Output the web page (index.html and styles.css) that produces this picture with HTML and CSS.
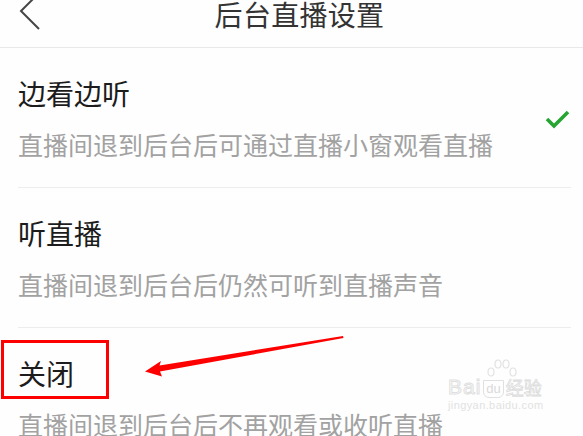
FILE: index.html
```html
<!DOCTYPE html>
<html lang="zh-CN">
<head>
<meta charset="utf-8">
<title>后台直播设置</title>
<link rel="stylesheet" href="styles.css">
</head>
<body>
<div class="page">
  <header class="topbar">
    <div class="back">
      <svg width="50" height="47" viewBox="0 0 50 47"><path d="M39 -7 L21 11 L39 29" fill="none" stroke="#454545" stroke-width="2"/></svg>
    </div>
    <h1 class="title">后台直播设置</h1>
    <div></div>
  </header>
  <ul class="list">
    <li class="item">
      <div class="texts">
        <div class="name">边看边听</div>
        <div class="desc">直播间退到后台后可通过直播小窗观看直播</div>
      </div>
      <svg class="check" width="26" height="22" viewBox="0 0 26 22"><path d="M2 11 L9 18 L23 4" fill="none" stroke="#26a532" stroke-width="3.6"/></svg>
    </li>
    <li class="item">
      <div class="texts">
        <div class="name">听直播</div>
        <div class="desc">直播间退到后台后仍然可听到直播声音</div>
      </div>
    </li>
    <li class="item">
      <div class="texts">
        <div class="name">关闭</div>
        <div class="desc">直播间退到后台后不再观看或收听直播</div>
      </div>
    </li>
  </ul>

  <svg class="marks" width="583" height="436" viewBox="0 0 583 436">
    <rect x="2.5" y="341.5" width="105" height="56" fill="none" stroke="#ff0000" stroke-width="3"/>
    <polygon points="145,371.5 161,361 159.5,365.5 343,336 343.5,338 160,371.5 162,376.5" fill="#ff0000"/>
  </svg>

  <div class="watermark">
    <div class="wm-top">
      <span class="wm-bai">Bai</span><span class="wm-du">du</span><span class="wm-jy">经验</span>
    </div>
    <div class="wm-url">jingyan.baidu.com</div>
    <svg class="wm-paw" width="32" height="24" viewBox="0 0 32 24">
      <g fill="none" stroke="#e2e2e2" stroke-width="1.2">
        <ellipse cx="5" cy="14" rx="3" ry="4"/>
        <ellipse cx="12" cy="6" rx="3" ry="4"/>
        <ellipse cx="20" cy="6" rx="3" ry="4"/>
        <ellipse cx="27" cy="14" rx="3" ry="4"/>
      </g>
    </svg>
  </div>
</div>
</body>
</html>
```

FILE: styles.css
```css
* { box-sizing: border-box; }
html, body {
  margin: 0;
  padding: 0;
  background: #ffffff;
}
body {
  width: 583px;
  height: 436px;
  overflow: hidden;
  font-family: "Noto Sans CJK SC", "Noto Sans", sans-serif;
}
.page {
  position: relative;
  width: 583px;
  height: 436px;
  overflow: hidden;
  background: #fefefe;
}
.topbar {
  display: grid;
  grid-template-columns: 1fr auto 1fr;
  align-items: start;
  height: 48px;
  border-bottom: 1px solid #e9e9e9;
}
.back svg { display: block; }
.title {
  margin: 0 0 0 16px;
  font-size: 28px;
  line-height: 28px;
  font-weight: 400;
  color: #333333;
  letter-spacing: 0.3px;
}
.list {
  list-style: none;
  margin: 0;
  padding: 0;
}
.item {
  display: flex;
  align-items: center;
  justify-content: space-between;
  margin: 0 12px 0 18px;
  height: 140px;
  border-bottom: 1px solid #ededed;
}
.texts {
  display: flex;
  flex-direction: column;
  gap: 17px;
  padding-top: 2px;
}
.name {
  font-size: 28px;
  line-height: 34px;
  color: #1c1c1c;
}
.desc {
  font-size: 25px;
  line-height: 34px;
  color: #a2a2a2;
}
.check {
  display: block;
  margin-top: 2px;
}
.marks {
  position: absolute;
  left: 0;
  top: 0;
  pointer-events: none;
}
.watermark {
  position: absolute;
  left: 448px;
  top: 376px;
  width: 104px;
  font-family: "Liberation Sans", Arial, sans-serif;
  color: #e6e6e6;
}
.wm-top {
  display: flex;
  align-items: flex-end;
  font-size: 21px;
  line-height: 22px;
}
.wm-bai {
  letter-spacing: 1px;
  color: transparent;
  -webkit-text-stroke: 1px #e0e0e0;
}
.wm-du {
  font-size: 13px;
  line-height: 16px;
  padding: 0 2px;
  margin: 0 2px;
  border: 1px solid #e0e0e0;
  border-radius: 0 0 6px 6px;
  color: #dadada;
}
.wm-jy {
  font-family: "Noto Sans CJK SC", sans-serif;
  font-size: 18px;
  color: transparent;
  -webkit-text-stroke: 0.8px #dcdcdc;
}
.wm-url {
  font-size: 11px;
  line-height: 14px;
  color: #e2e2e2;
  letter-spacing: 0.4px;
}
.wm-paw {
  position: absolute;
  left: 38px;
  top: -18px;
}
```
